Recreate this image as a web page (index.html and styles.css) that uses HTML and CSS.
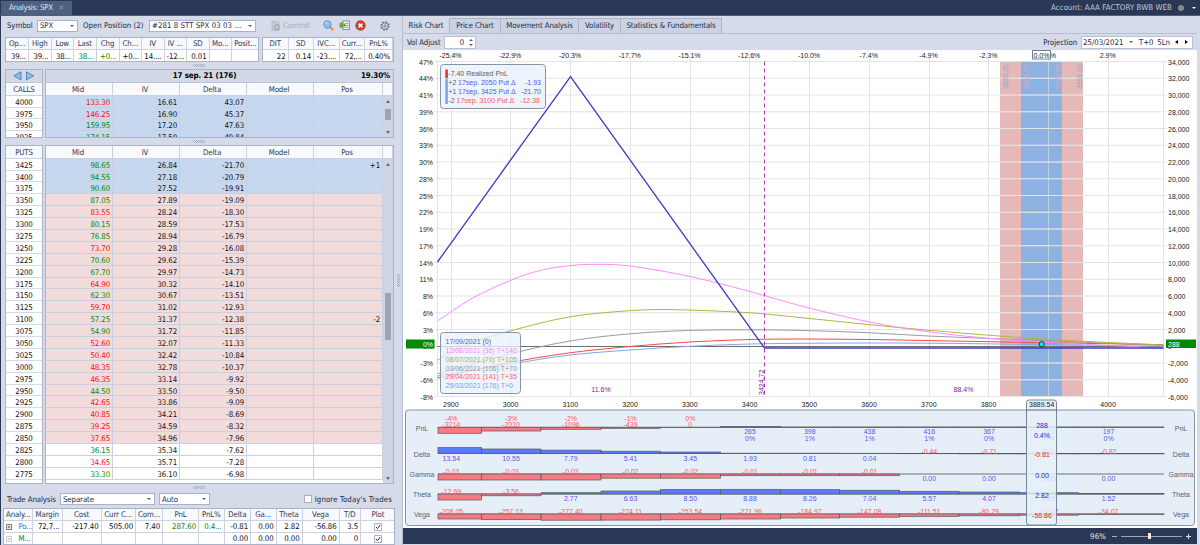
FILE: index.html
```html
<!DOCTYPE html>
<html lang="en">
<head>
    <meta charset="UTF-8">
    <meta name="viewport" content="width=device-width, initial-scale=1.0">
    <title>Analysis: SPX</title>
    <link rel="stylesheet" href="styles.css">
</head>
<body>
    <div class="app">
        <header class="titlebar">
            <div class="doc-tab">Analysis: SPX <span class="close">✕</span></div>
            <div class="account">Account: AAA FACTORY BWB WEB <i class="dot"></i><i class="caret light"></i></div>
        </header>

        <div class="workspace">
            <!-- Option chain side -->
            <section class="left">
                <div class="toolbar">
                    <span class="lbl-symbol">Symbol</span>
                    <div class="select symbol">SPX<i class="caret"></i></div>
                    <span class="lbl-position">Open Position (2)</span>
                    <div class="select position">#281 8 STT SPX 03 03 ...<i class="caret"></i></div>
                    <div class="commit">
                        <svg width="10" height="10" viewBox="0 0 10 10"><path d="M1 .5h6l1 1v8H1z" fill="#c9cdd6" stroke="#aab0bd" stroke-width=".7"/><circle cx="6" cy="6.2" r="2.6" fill="#b4b9c4" stroke="#9299a8" stroke-width=".6"/><circle cx="6" cy="6.2" r=".9" fill="#dfe3ec"/></svg>
                        Commit
                    </div>
                    <svg class="ico-search" width="11" height="11" viewBox="0 0 11 11"><path d="M7 7l2.8 2.8" stroke="#d98a3a" stroke-width="1.8" stroke-linecap="round"/><circle cx="4.5" cy="4.5" r="3.6" fill="#8fc1ee" stroke="#6a9bd2" stroke-width="1.1"/><path d="M2.6 4a2 2 0 0 1 2-1.6" stroke="#e9f5ff" fill="none"/></svg>
                    <svg class="ico-export" width="11" height="11" viewBox="0 0 11 11"><rect x="4" y="1" width="6.3" height="8.6" fill="#fff" stroke="#65748f" stroke-width=".8"/><path d="M5.5 3.3h4M5.5 5.3h4M5.5 7.3h4" stroke="#65748f" stroke-width=".8"/><path d="M.5 3.5L4 1.6v6.8L.5 7z" fill="#74a33c"/><path d="M3 5.3h3.2M4.9 4l1.4 1.3L4.9 6.6" stroke="#46701b" fill="none" stroke-width=".8"/></svg>
                    <svg class="ico-delete" width="11" height="11" viewBox="0 0 11 11"><circle cx="5.5" cy="5.5" r="4.9" fill="#d8352c" stroke="#a9564f" stroke-width=".6"/><path d="M3.6 3.6l3.8 3.8M7.4 3.6L3.6 7.4" stroke="#fff" stroke-width="1.6"/></svg>
                    <svg class="ico-gear" width="10" height="10" viewBox="0 0 10 10"><circle cx="5" cy="5" r="4.1" fill="none" stroke="#5c6983" stroke-width="1.1" stroke-dasharray="1.9 1.3"/><circle cx="5" cy="5" r="3.1" fill="#e4e8f1" stroke="#5c6983" stroke-width=".8"/><circle cx="5" cy="5" r="1.2" fill="#d5dbe9" stroke="#5c6983" stroke-width=".8"/></svg>
                </div>

                <div class="quotes">
                    <div class="grid quote" id="quote"></div>
                    <div class="grid risk" id="risk"></div>
                </div>
                <div class="grip"></div>

                <div class="chain calls">
                    <div class="strikes">
                        <div class="expiry arrows">
                            <svg width="22" height="10" viewBox="0 0 22 10"><path d="M8 .8v8L.8 4.8z" fill="#8ebcf0" stroke="#3f74b8" stroke-width=".8"/><path d="M13.5 .8v8l7.2-4z" fill="#8ebcf0" stroke="#3f74b8" stroke-width=".8"/></svg>
                        </div>
                        <div class="head">CALLS</div>
                        <div id="call-strikes"></div>
                    </div>
                    <div class="options">
                        <div class="expiry"><b>17 sep. 21 (176)</b><b class="iv">19.30%</b></div>
                        <div class="row head"><span>Mid</span><span>IV</span><span>Delta</span><span>Model</span><span>Pos</span><span></span></div>
                        <div class="scroller">
                            <div class="rows" id="calls"></div>
                            <div class="scrollbar"><i class="up"></i><i class="thumb"></i><i class="down"></i></div>
                        </div>
                    </div>
                </div>
                <div class="grip"></div>

                <div class="chain puts">
                    <div class="strikes">
                        <div class="head">PUTS</div>
                        <div id="put-strikes"></div>
                    </div>
                    <div class="options">
                        <div class="row head"><span>Mid</span><span>IV</span><span>Delta</span><span>Model</span><span>Pos</span><span></span></div>
                        <div class="scroller">
                            <div class="rows" id="puts"></div>
                            <div class="scrollbar"><i class="up"></i><i class="thumb"></i><i class="down"></i></div>
                        </div>
                    </div>
                </div>
                <div class="grip"></div>

                <div class="trade-bar">
                    <span class="lbl-trade">Trade Analysis</span>
                    <div class="select separate">Separate<i class="caret"></i></div>
                    <div class="select auto">Auto<i class="caret"></i></div>
                    <label class="ignore"><i class="check"></i>Ignore Today's Trades</label>
                </div>
                <div class="grid trades" id="trades"></div>
            </section>

            <div class="splitter"></div>

            <!-- Chart side -->
            <section class="right">
                <nav class="tabs">
                    <div class="tab t1 active">Risk Chart</div>
                    <div class="tab t2">Price Chart</div>
                    <div class="tab t3">Movement Analysis</div>
                    <div class="tab t4">Volatility</div>
                    <div class="tab t5">Statistics &amp; Fundamentals</div>
                </nav>
                <div class="chart-bar">
                    <span class="lbl-vol">Vol Adjust</span>
                    <div class="spin">0<span class="spin-btns"><i class="up"></i><i class="down"></i></span></div>
                    <span class="lbl-projection">Projection</span>
                    <div class="projection"><span class="date">25/03/2021</span><i class="caret"></i><span class="t0">T+0</span><span>5Ln</span><i class="prev"></i><i class="next"></i></div>
                </div>
                <svg class="chart" id="chart" width="794" height="478" viewBox="403 50 794 478"></svg>
                <footer class="zoombar">
                    <span>96%</span><i class="minus"></i><i class="track"><i class="knob"></i></i><i class="plus"></i>
                </footer>
            </section>
        </div>
    </div>
    <script src="script.js"></script>
</body>
</html>
```

FILE: styles.css
```css
* {
    margin: 0;
    padding: 0;
    box-sizing: border-box;
}

body {
    width: 1200px;
    height: 545px;
    overflow: hidden;
    background: #d5dbe9;
    font-family: 'DejaVu Sans Condensed', 'DejaVu Sans', sans-serif;
    font-stretch: condensed;
    font-size: 7.8px;
    letter-spacing: -0.1px;
    color: #101018;
}

i {
    font-style: normal;
}

.app {
    height: 545px;
    display: flex;
    flex-direction: column;
}

/* Title bar */
.titlebar {
    height: 16px;
    flex: none;
    background: #2a3855;
    border-bottom: 1px solid #4d6082;
    display: flex;
    justify-content: space-between;
    align-items: flex-end;
    padding: 0 4px 0 1px;
    color: #dfe5f1;
}

.doc-tab {
    width: 71px;
    height: 14px;
    background: #4d6082;
    padding-left: 8px;
    line-height: 14px;
    white-space: nowrap;
    letter-spacing: -0.25px;
}

.close {
    font-size: 7px;
    margin-left: 4px;
    color: #8d9bb8;
}

.account {
    display: flex;
    align-items: center;
    height: 15px;
    color: #c3cbdc;
    letter-spacing: 0.1px;
}

.dot {
    width: 6px;
    height: 6px;
    border-radius: 50%;
    background: #8b8a85;
    margin: 0 8px 0 6px;
}

.caret {
    width: 0;
    height: 0;
    border: 2.3px solid transparent;
    border-top: 2.5px solid #4c5f80;
    border-bottom: 0;
    flex: none;
}

.caret.light {
    border-top-color: #fff;
}

/* Left side */
.workspace {
    flex: 1;
    display: flex;
    min-height: 0;
}

.left {
    width: 395px;
    border-left: 1.5px solid #2a3855;
    padding-left: 3px;
    display: flex;
    flex-direction: column;
}

.toolbar {
    height: 21px;
    display: flex;
    align-items: center;
    padding: 0 0 1px 3px;
    white-space: nowrap;
    color: #1e2a44;
}

.select {
    height: 12px;
    background: #fff;
    border: 1px solid #a7b1c9;
    display: flex;
    align-items: center;
    justify-content: space-between;
    padding: 0 3px 0 2px;
    color: #1e2a44;
    white-space: nowrap;
    flex: none;
}

.lbl-symbol { width: 30px; }
.lbl-position { width: 66px; margin-left: 5px; letter-spacing: 0; }
.symbol { width: 41px; }
.position { width: 107px; letter-spacing: 0.05px; }

.commit {
    display: flex;
    align-items: center;
    gap: 2px;
    width: 52px;
    margin-left: 15px;
    color: #a3a9b8;
}

.ico-search { margin-left: 0; }
.ico-export { margin-left: 5px; }
.ico-delete { margin-left: 5px; }
.ico-gear { margin-left: 14px; }

.quotes {
    height: 25px;
    display: flex;
    gap: 3px;
    padding-left: 1px;
}

.grid {
    background: #fff;
    border: 1px solid #a9b2c9;
    overflow: hidden;
}

.quote { width: 254px; }
.risk { width: 132px; }

.grid .line {
    display: flex;
    height: 12px;
    line-height: 12px;
    border-bottom: 1px solid #ccd2e0;
}

.quotes .line:last-child {
    line-height: 13px;
}

.grid .line:first-child {
    background: #f8f9fd;
    color: #2b3854;
    text-align: center;
}

.grid .line span {
    border-right: 1px solid #ccd2e0;
    padding: 0 2px;
    white-space: nowrap;
    overflow: hidden;
    flex: none;
    text-align: right;
}

.grid .line:first-child span {
    text-align: center;
}

.up-val { color: #008a00; }
.down-val { color: #fa0c0c; }
.link-val { color: #1a86d8; }

.grip {
    height: 7px;
    flex: none;
}

.grip::after {
    content: "";
    display: block;
    width: 12px;
    height: 3px;
    margin: 2px 0 0 189px;
    background: repeating-conic-gradient(#a3acc2 0 25%, transparent 0 50%) 0 0 / 2px 2px;
}

/* Option chains */
.chain {
    display: flex;
    gap: 2px;
    padding-left: 1px;
    flex: none;
}

.calls { height: 69px; }
.puts { height: 339px; }

.strikes,
.options {
    border: 1px solid #a9b2c9;
    background: #fff;
    overflow: hidden;
    display: flex;
    flex-direction: column;
}

.strikes {
    width: 38px;
    text-align: center;
    flex: none;
}

.options {
    width: 349px;
}

.expiry {
    height: 13px;
    flex: none;
    background: #d2d8e6;
    border-bottom: 1px solid #bcc4d6;
    display: grid;
    grid-template-columns: 1fr;
    align-items: center;
    text-align: center;
    font-size: 7.9px;
    letter-spacing: -0.1px;
    color: #000;
}

.expiry b,
.expiry .iv {
    grid-area: 1 / 1;
}

.expiry b:first-child {
    padding-right: 30px;
}

.expiry .iv {
    text-align: right;
    padding-right: 3px;
}

.arrows {
    justify-items: center;
}

.head {
    height: 13px;
    line-height: 13px;
    flex: none;
    background: #f8f9fd;
    color: #2b3854;
    border-bottom: 1px solid #ccd2e0;
}

.strike {
    height: 11.9px;
    line-height: 13.4px;
    border-bottom: 1px solid #d5dae8;
}

.row {
    display: grid;
    grid-template-columns: 67px 67px 67px 67px 69px;
    height: 11.9px;
    line-height: 13.4px;
    border-bottom: 1px solid #ccd0de;
    text-align: right;
}

.row span {
    height: 11.9px;
    border-right: 1px solid #ccd0de;
    padding-right: 2px;
}

.row.head {
    grid-template-columns: 67px 67px 67px 67px 69px 10px;
    height: 13px;
    line-height: 13px;
    text-align: center;
}

.row.head span {
    height: 12px;
}

.row.blue { background: #c5d8ef; }
.row.pink { background: #f2dcdb; }

.scroller {
    display: flex;
    flex: 1;
    min-height: 0;
    overflow: hidden;
}

.rows {
    width: 337px;
    flex: none;
}

.scrollbar {
    flex: 1;
    background: #cfd5e4;
    display: flex;
    flex-direction: column;
    align-items: center;
}

.scrollbar .up,
.scrollbar .down {
    border: 2.5px solid transparent;
}

.scrollbar .up {
    border-bottom: 3px solid #5c6a86;
    border-top: 0;
    margin-top: 4px;
}

.scrollbar .down {
    border-top: 3px solid #5c6a86;
    border-bottom: 0;
    margin-top: auto;
    margin-bottom: 3px;
}

.thumb {
    width: 6px;
    background: #9ba5b9;
}

.calls .thumb { height: 11px; margin-top: 6px; }
.puts .thumb { height: 47px; margin-top: 127px; }

/* Trade analysis */
.trade-bar {
    height: 15px;
    margin: 1px 0;
    flex: none;
    display: flex;
    align-items: center;
    padding-left: 3px;
    color: #1e2a44;
}

.lbl-trade { width: 53px; }
.separate { width: 95px; }
.auto { width: 51px; margin-left: 4px; }

.ignore {
    display: flex;
    align-items: center;
    gap: 3px;
    margin-left: auto;
    white-space: nowrap;
    padding-right: 3px;
    letter-spacing: 0.1px;
}

.check {
    width: 8px;
    height: 8px;
    background: #fff;
    border: 1px solid #a7b1c9;
    display: inline-block;
}

.trades {
    width: 392px;
    height: 38px;
    margin-left: -1px;
}

.trades .line svg {
    vertical-align: middle;
}

/* Splitter */
.splitter {
    width: 8px;
    border-right: 1px solid #b6bfd3;
    display: flex;
    align-items: center;
    padding-left: 2px;
}

.splitter::after {
    content: "";
    width: 3px;
    height: 13px;
    background: repeating-conic-gradient(#a3acc2 0 25%, transparent 0 50%) 0 0 / 2px 2px;
}

/* Right side */
.right {
    width: 794px;
    display: flex;
    flex-direction: column;
}

.tabs {
    height: 18px;
    flex: none;
    display: flex;
    padding-top: 2px;
    border-bottom: 1px solid #b5bed2;
    color: #1e2a44;
}

.tab {
    background: #cbd2e2;
    border: 1px solid #a9b4ca;
    border-left: 0;
    border-bottom: 0;
    text-align: center;
    line-height: 14px;
    white-space: nowrap;
}

.tab.active {
    background: #d5dbe9;
    border-top-color: #d5dbe9;
}

.t1 { width: 47px; }
.t2 { width: 51px; }
.t3 { width: 78px; }
.t4 { width: 42px; }
.t5 { width: 101px; }

.chart-bar {
    height: 16px;
    flex: none;
    display: flex;
    align-items: center;
    padding-left: 4px;
    color: #1e2a44;
}

.lbl-vol { width: 37px; white-space: nowrap; }

.spin {
    width: 32px;
    height: 13px;
    background: #fff;
    border: 1px solid #b9c1d4;
    display: flex;
    align-items: center;
    justify-content: flex-end;
    gap: 5px;
    padding-right: 2px;
}

.spin-btns {
    display: flex;
    flex-direction: column;
    gap: 3px;
}

.spin-btns i {
    border: 2px solid transparent;
}

.spin-btns .up { border-bottom: 2.5px solid #4c5f80; border-top: 0; }
.spin-btns .down { border-top: 2.5px solid #4c5f80; border-bottom: 0; }

.lbl-projection {
    margin-left: auto;
    margin-right: 4px;
}

.projection {
    width: 112px;
    height: 13px;
    margin-right: 4px;
    background: #fff;
    border: 1px solid #b9c1d4;
    display: flex;
    align-items: center;
    padding-left: 1px;
    white-space: nowrap;
}

.date { width: 46px; letter-spacing: 0; }
.projection .t0 { margin: 0 4px 0 6px; }

.prev,
.next {
    border: 2.5px solid transparent;
}

.prev { border-right: 3px solid #000; border-left: 0; margin-left: 5px; }
.next { border-left: 3px solid #000; border-right: 0; margin-left: 7px; }

.chart {
    display: block;
    flex: none;
    background: #fff;
    font-family: 'Liberation Sans', Arial, sans-serif;
    font-stretch: normal;
    font-size: 7px;
    letter-spacing: 0;
}

/* Chart parts */
.gridline { stroke: #e3e3e3; stroke-width: 1; }
.band-red { fill: #e6b8b7; }
.band-blue { fill: #8db2e2; }
.band-line { stroke: #e0e4ea; stroke-opacity: .6; }
.on-red { fill: #8fa6d0; }
.on-blue { fill: #d0b0c4; }
.axis { fill: #202020; }
.curve { fill: none; stroke-width: 1; }
.expiration { stroke: #3a3ac4; stroke-width: 1.3; }
.breakeven { stroke: #b03cb0; stroke-dasharray: 4 3; }
.purple { fill: #8c1a96; }
.panel { fill: #e6eff8; stroke: #8492a4; stroke-width: 1; }
.legend { fill: #e9f1fa; fill-opacity: .8; stroke: #8794a3; }
.cursor { fill: #e6eff8; fill-opacity: .85; stroke: #75869a; }
.badge { fill: #008a00; }
.greek { fill: #5a606a; }
.neg { fill: #f45a62; }
.pos { fill: #5656f0; }
.bar-neg { fill: #f67a80; stroke: #565a60; stroke-width: .7; }
.bar-pos { fill: #5a7cf8; stroke: #565a60; stroke-width: .7; }
.base { stroke: #4c5055; stroke-width: .8; }
.strong-pos { fill: #1c1cf0; }
.strong-neg { fill: #f01c1c; }

/* Zoom footer */
.zoombar {
    height: 16px;
    flex: none;
    background: #2a3855;
    color: #e6eaf2;
    display: flex;
    align-items: center;
    justify-content: flex-end;
    padding-right: 6px;
    letter-spacing: 0.1px;
}

.minus,
.plus {
    width: 5px;
    height: 1px;
    background: #a9b4c8;
}

.minus { margin-left: 6px; }

.plus {
    height: 5px;
    margin-left: 4px;
    background: linear-gradient(#dfe4ee, #dfe4ee) center / 5px 1px no-repeat, linear-gradient(#dfe4ee, #dfe4ee) center / 1px 5px no-repeat;
}

.track {
    width: 61px;
    height: 1px;
    margin-left: 4px;
    background: #9aa6bc;
    display: flex;
    align-items: center;
}

.knob {
    width: 3px;
    height: 6px;
    margin-left: 27px;
    background: #f3ead0;
    flex: none;
}
```

FILE: script.js
```js
const byId = id => document.getElementById(id);

/* ---------- small grids ---------- */

// each column: [width, header, ...cells], a cell is "text" or "text|class"
function renderGrid(id, cols) {
    let html = '';
    for (let r = 1; r < cols[0].length; r++) {
        html += '<div class="line">' + cols.map(c => {
            const [text, cls] = c[r].split('|');
            return `<span class="${cls || ''}" style="width:${c[0]}px">${text}</span>`;
        }).join('') + '</div>';
    }
    byId(id).innerHTML = html;
}

renderGrid('quote', [
    [23, 'Op...', '39...'], [22.5, 'High', '39...'], [22.5, 'Low', '38...'],
    [22.5, 'Last', '38...|up-val'], [23, 'Chg', '+0...|up-val'], [22.5, 'Ch...', '+0...'],
    [22.5, 'IV', '14....'], [22.5, 'IV ...', '-12...'], [22.5, 'SD', '0.01'],
    [22.5, 'Mo...', ''], [28, 'Posit...', '']
]);

renderGrid('risk', [
    [25.5, 'DIT', '22'], [25.5, 'SD', '0.14'], [25.5, 'IVC...', '-23....'],
    [25.5, 'Curr...', '72,...'], [28, 'PnL%', '0.40%']
]);

const plus = o => `<svg width="6" height="6" viewBox="0 0 6 6" opacity="${o}"><path d="M.5 .5h5v5h-5zM1.5 3h3M3 1.5v3" fill="none" stroke="#444" stroke-width=".7"/></svg>`;
const tick = '<svg width="8" height="8" viewBox="0 0 8 8"><path d="M.5 .5h7v7h-7z" fill="#fff" stroke="#a7b1c9"/><path d="M2 4l1.5 1.7L6.2 2" fill="none" stroke="#333"/></svg>';

renderGrid('trades', [
    [29, 'Analy...', plus(1) + '&nbsp;&nbsp; Po...|link-val', plus(.4) + '&nbsp;&nbsp; M...|up-val'],
    [29.5, 'Margin', '72,7...', ''],
    [39, 'Cost', '-217.40', ''],
    [34.5, 'Curr C...', '505.00', ''],
    [27, 'Com...', '7.40', ''],
    [36, 'PnL', '287.60|up-val', ''],
    [25.5, 'PnL%', '0.4...|up-val', ''],
    [26.5, 'Delta', '-0.81', '0.00'],
    [25.5, 'Ga...', '0.00', '0.00'],
    [26, 'Theta', '2.82', '0.00'],
    [37, 'Vega', '-56.86', '0.00'],
    [21.5, 'T/D', '3.5', '0'],
    [35, 'Plot', tick, tick]
]);
document.querySelectorAll('#trades .line:not(:first-child) span:last-child').forEach(s => s.style.textAlign = 'center');
document.querySelectorAll('#trades .line:not(:first-child) span:first-child').forEach(s => s.style.textAlign = 'left');

/* ---------- option chains ---------- */

// mid, direction, iv, delta, pos
const calls = [
    [4000, '133.30', 'down', '16.61', '43.07'],
    [3975, '146.25', 'down', '16.90', '45.37'],
    [3950, '159.95', 'up', '17.20', '47.63'],
    [3925, '174.15', 'up', '17.50', '49.84']
];

const puts = [
    [3425, '98.65', 'up', '26.84', '-21.70', '+1'],
    [3400, '94.55', 'up', '27.18', '-20.79'],
    [3375, '90.60', 'up', '27.52', '-19.91'],
    [3350, '87.05', 'up', '27.89', '-19.09'],
    [3325, '83.55', 'down', '28.24', '-18.30'],
    [3300, '80.15', 'up', '28.59', '-17.53'],
    [3275, '76.85', 'up', '28.94', '-16.79'],
    [3250, '73.70', 'down', '29.28', '-16.08'],
    [3225, '70.60', 'up', '29.62', '-15.39'],
    [3200, '67.70', 'up', '29.97', '-14.73'],
    [3175, '64.90', 'down', '30.32', '-14.10'],
    [3150, '62.30', 'up', '30.67', '-13.51'],
    [3125, '59.70', 'down', '31.02', '-12.93'],
    [3100, '57.25', 'up', '31.37', '-12.38', '-2'],
    [3075, '54.90', 'up', '31.72', '-11.85'],
    [3050, '52.60', 'down', '32.07', '-11.33'],
    [3025, '50.40', 'down', '32.42', '-10.84'],
    [3000, '48.35', 'down', '32.78', '-10.37'],
    [2975, '46.35', 'down', '33.14', '-9.92'],
    [2950, '44.50', 'up', '33.50', '-9.50'],
    [2925, '42.65', 'down', '33.86', '-9.09'],
    [2900, '40.85', 'down', '34.21', '-8.69'],
    [2875, '39.25', 'down', '34.59', '-8.32'],
    [2850, '37.65', 'down', '34.96', '-7.96'],
    [2825, '36.15', 'up', '35.34', '-7.62'],
    [2800, '34.65', 'down', '35.71', '-7.28'],
    [2775, '33.30', 'up', '36.10', '-6.98']
];

function rowColor(strike) {
    if (strike >= 3375) return 'blue';
    if (strike >= 2850) return 'pink';
    return '';
}

function renderChain(strikesId, rowsId, data) {
    byId(strikesId).innerHTML = data.map(d => `<div class="strike">${d[0]}</div>`).join('');
    byId(rowsId).innerHTML = data.map(([strike, mid, dir, iv, delta, pos]) => `
        <div class="row ${rowColor(strike)}">
            <span class="${dir}-val">${mid}</span><span>${iv}</span><span>${delta}</span><span></span><span>${pos || ''}</span>
        </div>`).join('');
}

renderChain('call-strikes', 'calls', calls);
renderChain('put-strikes', 'puts', puts);

/* ---------- risk chart ---------- */

const LEFT = 437.5, RIGHT = 1163.5, TOP = 61.5, BOTTOM = 396.5;
const priceX = p => 450.5 + (p - 2900) * 0.5975;
const pnlY = v => TOP + (34000 - v) * (BOTTOM - TOP) / 40000;
const out = [];

const line = (x1, y1, x2, y2, cls) => out.push(`<line x1="${x1}" y1="${y1}" x2="${x2}" y2="${y2}" class="${cls}"/>`);
const rect = (x, y, w, h, cls, r = 0) => out.push(`<rect x="${x}" y="${y}" width="${w}" height="${h}" rx="${r}" class="${cls}"/>`);
// y is the middle of the text
const text = (x, y, s, cls, anchor = 'middle', extra = '') =>
    out.push(`<text x="${x}" y="${y + 2.5}" class="${cls}" text-anchor="${anchor}" ${extra}>${s}</text>`);

// Catmull-Rom through the points
function smooth(pts) {
    let d = `M${pts[0]}`;
    for (let i = 0; i < pts.length - 1; i++) {
        const a = pts[i - 1] || pts[i], b = pts[i], c = pts[i + 1], e = pts[i + 2] || c;
        const t = (c[0] - b[0]) / 3;
        const m1 = (c[1] - a[1]) / (c[0] - a[0]), m2 = (e[1] - b[1]) / (e[0] - b[0]);
        d += `C${b[0] + t},${b[1] + t * m1} ${c[0] - t},${c[1] - t * m2} ${c}`;
    }
    return d;
}

// grid
const strikes = [];
for (let p = 2900; p <= 4000; p += 100) strikes.push(p);
strikes.forEach(p => line(Math.round(priceX(p)) + .5, TOP - 3, Math.round(priceX(p)) + .5, BOTTOM, 'gridline'));
line(LEFT, TOP, LEFT, BOTTOM, 'gridline');
line(RIGHT, TOP, RIGHT, BOTTOM, 'gridline');

rect(1000, TOP, 21, 335, 'band-red');
rect(1021, TOP, 41, 335, 'band-blue');
rect(1062, TOP, 21, 335, 'band-red');
line(1048.5, TOP, 1048.5, BOTTOM, 'band-line');

const percents = [47, 44, 41, 39, 36, 33, 30, 28, 25, 22, 19, 17, 14, 11, 8, 6, 3, 0, -3, -6, -8];
percents.forEach((p, i) => {
    const v = 34000 - i * 2000;
    const y = pnlY(v);
    line(LEFT - 3, y, RIGHT + 3, y, 'gridline');
    line(1000, y, 1083, y, 'band-line');
    text(433, y + .7, p + '%', 'axis', 'end');
    text(1168, y + .7, v.toLocaleString('en-US'), 'axis', 'start');
});

const moves = ['-25.4%', '-22.9%', '-20.3%', '-17.7%', '-15.1%', '-12.6%', '-10.0%', '-7.4%', '-4.9%', '-2.3%', '0.3%', '2.9%'];
strikes.forEach((p, i) => {
    text(priceX(p), 55.3, moves[i], 'axis');
    if (p !== 3900) text(priceX(p) + .3, 404.7, p, 'axis');
});
out.push('<rect x="1032.5" y="50.5" width="18" height="8.5" fill="#fff" stroke="#6f8193"/>');
text(1041.5, 55.3, '0.0%', 'axis');

[[1005.5, '3820.26', 'on-red'], [1026, '3854.70', 'on-blue'], [1058.5, '3923.58', 'on-blue'], [1079, '3958.02', 'on-red']].forEach(([x, s, cls]) =>
    text(0, 0, s, cls, 'end', `transform="translate(${x} 64) rotate(-90)"`));

line(LEFT, 346.5, RIGHT, 346.5, 'base');

const curves = [
    ['#80a8f0', [[437.5, 376], [520, 362.5], [570, 355], [630, 350], [690, 346.3], [750, 344], [800, 343.3], [900, 343], [1000, 344], [1163.5, 346.3]]],
    ['#fa4848', [[437.5, 378], [510, 362.5], [570, 352.8], [630, 346.5], [690, 342], [750, 339.5], [800, 339], [870, 339.5], [928, 340.6], [1041, 342.6], [1163.5, 344.7]]],
    ['#9c9c9c', [[437.5, 374], [510, 354], [570, 341], [630, 333.8], [690, 330.4], [750, 329.8], [800, 330.4], [868, 332.7], [928, 336], [1041, 340.5], [1163.5, 345.5]]],
    ['#b4b440', [[437.5, 360], [470, 343.5], [510, 331], [570, 316.8], [630, 310.7], [670, 309.6], [750, 312.8], [800, 317.5], [868, 324.5], [928, 330.2], [1041, 339], [1163.5, 345]]],
    ['#ff8cff', [[437.5, 321], [470, 299.5], [510, 280.5], [540, 270.5], [570, 265.6], [597, 264.3], [630, 266], [690, 276.5], [750, 291.5], [800, 305.7], [868, 321.7], [928, 331.7], [988, 338.3], [1041, 342], [1163.5, 348]]]
];
curves.forEach(([color, pts]) => out.push(`<path class="curve" stroke="${color}" d="${smooth(pts)}"/>`));
out.push('<path class="curve expiration" d="M437.5 262L570.5 76.5L764.5 348H1163.5"/>');

line(764.5, TOP, 764.5, BOTTOM, 'breakeven');
text(0, 0, '3424.72', 'purple', 'start', 'transform="translate(761.5 395) rotate(-90)"');
text(601, 389, '11.6%', 'purple');
text(963.5, 389, '88.4%', 'purple');
out.push('<circle cx="1041.7" cy="344.2" r="2.6" fill="#10e4ec" stroke="#222" stroke-width=".9"/>');

rect(406, 339.5, 28.5, 9, 'badge');
text(433, 344.4, '0%', '', 'end', 'fill="#fff"');
rect(1166, 339.5, 30, 8.5, 'badge');
text(1168, 344.3, '288', '', 'start', 'fill="#fff"');

// position legend
rect(440.5, 64.5, 105, 44, 'legend', 3);
out.push('<rect x="445.3" y="69.5" width="2.6" height="8.5" fill="#fa2c2c"/><rect x="445.3" y="78.5" width="2.6" height="25.5" fill="#80a8e8"/>');
text(448.3, 73.8, '-7.40 Realized PnL', 'greek', 'start');
[['+2', '17sep. 2050 Put Δ', '-1.93', 'pos'], ['+1', '17sep. 3425 Put Δ', '-21.70', 'pos'], ['-2', '17sep. 3100 Put Δ', '-12.38', 'neg']].forEach(([qty, leg, delta, cls], i) => {
    const y = 82.7 + i * 8.8;
    text(448.3, y, qty, 'greek', 'start');
    text(cls === 'pos' ? 458 : 456.5, y, leg, cls, 'start');
    text(cls === 'pos' ? 541 : 540, y, delta, cls, 'end');
});

// date legend
rect(440.5, 332.5, 80, 61, 'legend', 3);
[
    ['17/09/2021 (0)', '#6060c4'], ['12/08/2021 (36) T+140', '#fc88fc'], ['08/07/2021 (71) T+105', '#acac50'],
    ['03/06/2021 (106) T+70', '#9898a0'], ['29/04/2021 (141) T+35', '#fc6060'], ['25/03/2021 (176) T+0', '#78a0f0']
].forEach(([s, color], i) => text(445.5, 341.6 + i * 8.8, s, '', 'start', `fill="${color}"`));

/* ---------- greeks panel ---------- */

rect(405.5, 410, 789, 115.5, 'panel', 3);
const edges = [438, 481.5, 541, 601, 660.5, 720.5, 780.5, 839.5, 899.5, 959, 1019, 1078.5, 1164];

// bars: height in px, negative hangs under the base line
const greeks = [
    { name: 'PnL', y: 427.3, bars: [-6, -3.7, -2, -1, -.2, .7, .3, .3, .3, .3, .3, .3],
      values: [-3214, -2010, -1096, -439, '0', 265, 398, 438, 416, 367, 279, 197],
      pct: ['-4%', '-3%', '-2%', '-1%', '0%', '0%', '1%', '1%', '1%', '0%', '0%', '0%'] },
    { name: 'Delta', y: 453.5, bars: [6, 4.5, 3.4, 2.3, 1.5, .3, .3, .2, -.2, -.4, -.4, -.4],
      values: ['13.54', '10.55', '7.79', '5.41', '3.45', '1.93', '0.81', '0.04', '-0.44', '-0.71', '-0.82', '-0.82'] },
    { name: 'Gamma', y: 474, bars: [-6, -6, -6, -4.2, -4.2, -1.7, -1.7, -1.7, 0, 0, 0, 0],
      values: ['-0.03', '-0.03', '-0.03', '-0.02', '-0.02', '-0.01', '-0.01', '-0.01', '0.00', '0.00', '0.00', '0.00'] },
    { name: 'Theta', y: 494, bars: [-6, -1.8, 1.3, 3, 4.5, 4.7, 4.4, 3.8, 2.7, 2, 1.3, .4],
      values: ['-12.69', '-3.56', '2.77', '6.63', '8.50', '8.88', '8.26', '7.04', '5.57', '4.07', '2.69', '1.52'] },
    { name: 'Vega', y: 514, bars: [-5, -5.6, -6.2, -6.1, -5.8, -5, -4, -3.2, -2.4, -1.8, -1.2, -.4],
      values: ['-208.05', '-257.13', '-277.40', '-274.11', '-253.54', '-221.96', '-184.97', '-147.08', '-111.51', '-80.29', '-51.47', '-34.07'] }
];

greeks.forEach(g => {
    text(422, g.y + .7, g.name, 'greek');
    text(1181, g.y + .7, g.name, 'greek');
    line(438, g.y, 1164, g.y, 'base');
    g.bars.forEach((h, i) => {
        if (h) rect(edges[i], h > 0 ? g.y - h : g.y, edges[i + 1] - edges[i], Math.abs(h), h > 0 ? 'bar-pos' : 'bar-neg');
    });
    g.values.forEach((v, i) => {
        const neg = String(v).startsWith('-') || v === '0';
        const x = priceX(strikes[i]) + .8;
        text(x, neg ? g.y - 2.4 : g.y + 4.5, v, neg ? 'neg' : 'pos');
        if (g.pct) text(x, neg ? g.y - 9.2 : g.y + 10.7, g.pct[i], neg ? 'neg' : 'pos');
    });
});

// price cursor over the panel
rect(1026.5, 400, 30, 125, 'cursor', 2.5);
line(1026.5, 410, 1056.5, 410, 'base');
text(1041.7, 404.7, '3889.54', 'axis');
text(1042, 425.5, '288', 'strong-pos');
text(1042, 435, '0.4%', 'strong-pos');
text(1042, 454.8, '-0.81', 'strong-neg');
text(1042, 475, '0.00', 'strong-pos');
text(1042, 495, '2.82', 'strong-pos');
text(1042, 515, '-56.86', 'strong-neg');

byId('chart').innerHTML = out.join('');
```
